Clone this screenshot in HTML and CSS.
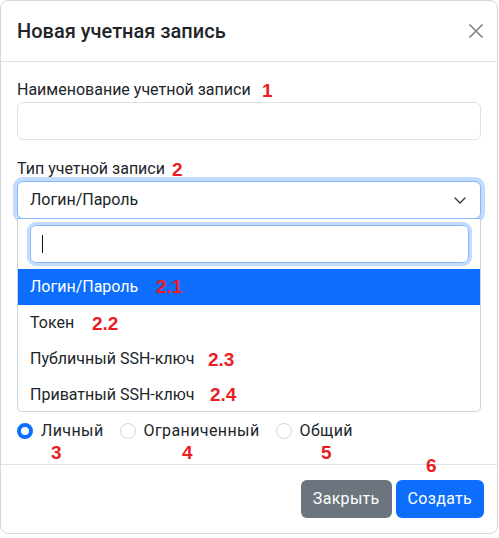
FILE: index.html
```html
<!DOCTYPE html>
<html lang="ru">
<head>
<meta charset="utf-8">
<title>Новая учетная запись</title>
<link rel="stylesheet" href="styles.css">
</head>
<body>
<div class="modal">
  <div class="modal-header">
    <h5 class="modal-title">Новая учетная запись</h5>
    <button class="btn-close" type="button" aria-label="Закрыть">
      <svg width="16" height="16" viewBox="0 0 16 16"><path d="M1.5 1.5 L14.5 14.5 M14.5 1.5 L1.5 14.5" stroke="#808080" stroke-width="1.6" fill="none"/></svg>
    </button>
  </div>
  <div class="modal-body">
    <div class="field field-first">
      <label class="form-label">Наименование учетной записи</label>
      <div class="form-control"></div>
    </div>
    <div class="field">
      <label class="form-label">Тип учетной записи</label>
      <div class="select-wrap">
        <div class="form-select">
          <span>Логин/Пароль</span>
          <svg class="chevron" width="16" height="12" viewBox="0 0 16 12"><path d="M3 4 L8 9 L13 4" stroke="#343a40" stroke-width="1.4" fill="none" stroke-linecap="round" stroke-linejoin="round"/></svg>
        </div>
        <div class="dropdown">
          <div class="dropdown-search"><div class="search-input"><span class="caret"></span></div></div>
          <ul class="options">
            <li class="option active">Логин/Пароль</li>
            <li class="option">Токен</li>
            <li class="option">Публичный SSH-ключ</li>
            <li class="option">Приватный SSH-ключ</li>
          </ul>
        </div>
      </div>
    </div>
    <div class="spacer"></div>
    <div class="radio-group">
      <label class="form-check"><span class="radio checked"></span>Личный</label>
      <label class="form-check"><span class="radio"></span>Ограниченный</label>
      <label class="form-check"><span class="radio"></span>Общий</label>
    </div>
  </div>
  <div class="modal-footer">
    <button class="btn btn-secondary" type="button">Закрыть</button>
    <button class="btn btn-primary" type="button">Создать</button>
  </div>

  <span class="mark m1">1</span>
  <span class="mark m2">2</span>
  <span class="mark m21">2.1</span>
  <span class="mark m22">2.2</span>
  <span class="mark m23">2.3</span>
  <span class="mark m24">2.4</span>
  <span class="mark m3">3</span>
  <span class="mark m4">4</span>
  <span class="mark m5">5</span>
  <span class="mark m6">6</span>
</div>
</body>
</html>
```
FILE: styles.css
```css
* { box-sizing: border-box; }
html, body { margin: 0; padding: 0; background: #fff; }
body {
  font-family: Roboto, "Open Sans", sans-serif;
  font-size: 16px;
  line-height: 24px;
  color: #212529;
}
.modal {
  position: relative;
  width: 498px;
  border: 1px solid #d5d7da;
  border-radius: 8px;
  background: #fff;
}
.modal-header {
  display: flex;
  align-items: center;
  padding: 15px 16px 15px 16px;
  border-bottom: 1px solid #dee2e6;
}
.modal-title {
  margin: 0;
  font-size: 20px;
  line-height: 30px;
  font-weight: 500;
}
.btn-close {
  margin-left: auto;
  margin-right: -3px;
  padding: 0;
  border: 0;
  background: transparent;
  width: 16px;
  height: 16px;
  display: flex;
}
.modal-body {
  padding: 16px 16px 16px 16px;
}
.field { margin-bottom: 16px; }
.field-first { margin-bottom: 17px; }
.form-label {
  display: block;
  margin-bottom: 0;
  height: 24px;
}
.form-control {
  height: 38px;
  border: 1px solid #dee2e6;
  border-radius: 6px;
  background: #fff;
}
.select-wrap { position: relative; }
.form-select {
  height: 38px;
  display: flex;
  align-items: center;
  justify-content: space-between;
  padding: 0 12px;
  border: 1px solid #86b7fe;
  border-radius: 6px;
  box-shadow: 0 0 0 4px rgba(13, 110, 253, 0.25);
  background: #fff;
}
.chevron { display: block; }
.dropdown {
  position: absolute;
  left: 0;
  right: 0;
  top: calc(100% - 1px);
  z-index: 5;
  background: #fff;
  border: 1px solid #ced4da;
  border-top-color: #86b7fe;
  border-radius: 0 0 5px 5px;
}
.dropdown-search {
  padding: 6px 11px 6px 12px;
}
.search-input {
  height: 38px;
  border: 1px solid #86b7fe;
  border-radius: 6px;
  box-shadow: 0 0 0 3px rgba(13, 110, 253, 0.25);
  display: flex;
  align-items: center;
  padding-left: 11px;
}
.caret {
  display: block;
  width: 1px;
  height: 18px;
  background: #111;
}
.options {
  list-style: none;
  margin: 0;
  padding: 0;
}
.option {
  height: 36px;
  line-height: 36px;
  padding: 0 12px;
}
.option:last-child { height: 34px; }
.option.active {
  background: #0d6efd;
  color: #fff;
}
.spacer { height: 184px; }
.radio-group {
  display: flex;
  height: 24px;
  margin-bottom: 5px;
}
.form-check {
  display: flex;
  align-items: flex-start;
  margin-right: 16px;
  letter-spacing: 0.4px;
}
.radio {
  width: 16px;
  height: 16px;
  margin-top: 4px;
  margin-right: 8px;
  border-radius: 50%;
  border: 1px solid #d3d6da;
  background: #fff;
}
.radio.checked {
  border: 4px solid #0d6efd;
  background: #fff;
}
.modal-footer {
  display: flex;
  justify-content: flex-end;
  gap: 4px;
  padding: 15px 13px 15px 16px;
  border-top: 1px solid #dee2e6;
}
.btn {
  height: 38px;
  padding: 0 12px;
  border: 0;
  border-radius: 6px;
  font-family: inherit;
  font-size: 16px;
  line-height: 38px;
  color: #fff;
  letter-spacing: 0.3px;
}
.btn-secondary { background: #6c757d; }
.btn-primary { background: #0d6efd; }
.mark {
  position: absolute;
  font-family: "Liberation Sans", Arial, sans-serif;
  font-weight: 700;
  font-size: 19px;
  line-height: 20px;
  color: #ed1c24;
  z-index: 10;
}
.m1 { left: 261px; top: 80px; }
.m2 { left: 171px; top: 159px; }
.m21 { left: 155px; top: 276px; }
.m22 { left: 91px; top: 313px; }
.m23 { left: 207px; top: 349px; }
.m24 { left: 209px; top: 384px; }
.m3 { left: 50px; top: 442px; }
.m4 { left: 181px; top: 442px; }
.m5 { left: 320px; top: 442px; }
.m6 { left: 425px; top: 455px; }
```
